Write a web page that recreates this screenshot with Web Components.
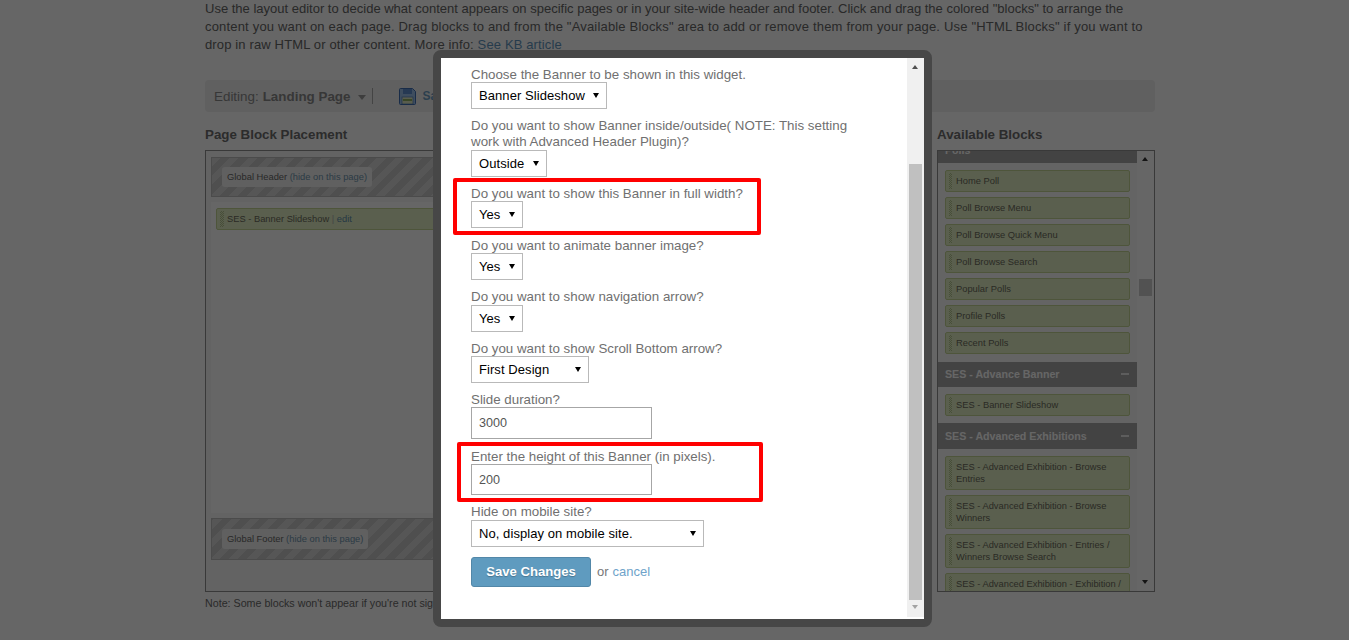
<!DOCTYPE html>
<html>
<head>
<meta charset="utf-8">
<style>
html,body{margin:0;padding:0;height:100%;overflow:hidden;background:#fff;font-family:"Liberation Sans",Arial,sans-serif;}
</style>
</head>
<body>
<layout-page>
  <span slot="intro">Use the layout editor to decide what content appears on specific pages or in your site-wide header and footer. Click and drag the colored "blocks" to arrange the<br><span style="letter-spacing:.18px">content you want on each page. Drag blocks to and from the "Available Blocks" area to add or remove them from your page. Use "HTML Blocks" if you want to</span><br><span style="letter-spacing:.14px">drop in raw HTML or other content. More info: <a style="color:#5f95bd;text-decoration:underline">See KB article</a></span></span>
  <editor-bar slot="bar"></editor-bar>
  <placement-box slot="left"></placement-box>
  <available-blocks slot="right">
    <block-group class="first" title="Polls">
      <block-item>Home Poll</block-item>
      <block-item>Poll Browse Menu</block-item>
      <block-item>Poll Browse Quick Menu</block-item>
      <block-item>Poll Browse Search</block-item>
      <block-item>Popular Polls</block-item>
      <block-item>Profile Polls</block-item>
      <block-item>Recent Polls</block-item>
    </block-group>
    <block-group title="SES - Advance Banner">
      <block-item>SES - Banner Slideshow</block-item>
    </block-group>
    <block-group title="SES - Advanced Exhibitions">
      <block-item>SES - Advanced Exhibition - Browse Entries</block-item>
      <block-item>SES - Advanced Exhibition - Browse Winners</block-item>
      <block-item>SES - Advanced Exhibition - Entries / Winners Browse Search</block-item>
      <block-item>SES - Advanced Exhibition - Exhibition / Album</block-item>
    </block-group>
  </available-blocks>
  <span slot="note">Note: Some blocks won't appear if you're not signed in</span>
</layout-page>

<modal-overlay>
  <form-field label="Choose the Banner to be shown in this widget."><fake-select style="width:136px">Banner Slideshow</fake-select></form-field>
  <form-field label="Do you want to show Banner inside/outside( NOTE: This setting work with Advanced Header Plugin)?"><fake-select style="width:76px">Outside</fake-select></form-field>
  <form-field label="Do you want to show this Banner in full width?" mark="a"><fake-select style="width:52px">Yes</fake-select></form-field>
  <form-field label="Do you want to animate banner image?"><fake-select style="width:52px">Yes</fake-select></form-field>
  <form-field label="Do you want to show navigation arrow?"><fake-select style="width:52px">Yes</fake-select></form-field>
  <form-field label="Do you want to show Scroll Bottom arrow?" style="margin-bottom:8px"><fake-select style="width:118px">First Design</fake-select></form-field>
  <form-field label="Slide duration?"><fake-input style="height:32px">3000</fake-input></form-field>
  <form-field label="Enter the height of this Banner (in pixels)." mark="b"><fake-input style="height:31px">200</fake-input></form-field>
  <form-field label="Hide on mobile site?"><fake-select style="width:233px">No, display on mobile site.</fake-select></form-field>
  <form-actions></form-actions>
</modal-overlay>

<script>
// small helper, every element is just css + markup in an open shadow root
function define(name, css, html) {
  customElements.define(name, class extends HTMLElement {
    constructor() {
      super();
      this.attachShadow({mode: 'open'});
      const t = document.createElement('template');
      t.innerHTML = '<style>' + css + '</style>' + html;
      this.shadowRoot.appendChild(t.content.cloneNode(true));
    }
    connectedCallback() {
      const lab = this.shadowRoot.querySelector('[data-label]');
      if (lab) lab.textContent = this.getAttribute('label');
      const ttl = this.shadowRoot.querySelector('[data-title]');
      if (ttl) ttl.textContent = this.getAttribute('title');
      if (this.hasAttribute('mark')) this.shadowRoot.querySelector('.mark').classList.add(this.getAttribute('mark'));
      if (this.classList.contains('first')) {
        this.shadowRoot.querySelector('.head').classList.add('first');
        this.shadowRoot.querySelector('.items').classList.add('first');
      }
    }
  });
}

define('layout-page', `
  :host{display:block;width:950px;margin-left:205px;font-family:"Liberation Sans",Arial,sans-serif;color:#666;}
  .intro{font-size:13px;line-height:18px;height:80px;white-space:nowrap;}
  .cols{display:grid;grid-template-columns:720px 218px;column-gap:12px;margin-top:15px;}
  .note{font-size:10.7px;line-height:14px;margin-top:4px;color:#6a6a6a;}
`, `
  <div class="intro"><slot name="intro"></slot></div>
  <slot name="bar"></slot>
  <div class="cols"><slot name="left"></slot><slot name="right"></slot></div>
  <div class="note"><slot name="note"></slot></div>
`);

define('editor-bar', `
  :host{display:flex;align-items:center;height:32px;background:#f0f0f0;border-radius:4px;padding-left:9px;font-size:13.4px;color:#8a8a8a;}
  b{margin-left:4px;}
  .caret{width:0;height:0;border:4px solid transparent;border-top:5px solid #999;border-bottom:0;margin:2px 6px 0 8px;}
  .sep{width:1px;height:16px;background:#aaa;margin-right:26px;}
  svg{margin-right:6px;}
  a{color:#6f9fc4;font-weight:bold;font-size:12px;}
`, `
  <span>Editing:</span><b>Landing Page</b><i class="caret"></i><i class="sep"></i>
  <svg width="17" height="17" viewBox="0 0 17 17"><path d="M.5 1.5a1 1 0 0 1 1-1h12l3 3v12a1 1 0 0 1-1 1h-14a1 1 0 0 1-1-1z" fill="#9cc0ea" stroke="#3f6fb5"/><rect x="4" y="1" width="9" height="5" fill="#5f8fd0"/><rect x="3" y="9" width="11" height="7" fill="#dfe8c0" stroke="#3f6fb5" stroke-width=".6"/><rect x="4" y="11" width="9" height="2" fill="#8fb060"/></svg>
  <a>Save</a>
`);

const stripes = 'repeating-linear-gradient(-45deg,#d8d8d8 0 6.5px,#c6c6c6 6.5px 13px)';
const itemCss = 'background:#e1eec4;border:1px solid #c3d495;border-radius:2px;color:#6b6b5b;font-size:9.33px;line-height:12px;';
const gripCss = 'background-image:conic-gradient(#b5c58e 25%,transparent 0 50%,#b5c58e 0 75%,transparent 0);background-size:2px 2px;';

define('placement-box', `
  :host{display:block;font-size:13.33px;}
  h4{margin:0 0 7px;font-size:13.33px;line-height:16px;color:#6e6e6e;}
  .box{box-sizing:border-box;height:442px;background:#f7f7f7;border:1px solid #8f8f8f;padding:6px 5px 31px;display:flex;flex-direction:column;gap:5px;}
  .band{background:${stripes};border:1px solid #bbb;padding:9px 10px;box-sizing:border-box;}
  .band.head{height:40px;}
  .band.foot{height:42px;padding-top:10px;}
  .pill{display:inline-block;background:#f0f0f0;border-radius:3px;font-size:9.33px;line-height:20px;padding:0 5px;color:#666;}
  .pill a{color:#6f94ad;}
  .zone{flex:1;background:#fff;padding:6px 5px;}
  .block{${itemCss}height:20px;line-height:20px;padding-left:10px;position:relative;}
  .block::before{content:"";position:absolute;left:3px;top:2px;bottom:2px;width:4px;${gripCss}}
  .block a{color:#5f8da8;}
`, `
  <h4>Page Block Placement</h4>
  <div class="box">
    <div class="band head"><span class="pill">Global Header <a>(hide on this page)</a></span></div>
    <div class="zone"><div class="block">SES - Banner Slideshow <span style="color:#aaa">|</span> <a>edit</a></div></div>
    <div class="band foot"><span class="pill">Global Footer <a>(hide on this page)</a></span></div>
  </div>
`);

define('available-blocks', `
  :host{display:block;}
  h4{margin:0 0 7px;font-size:13.33px;line-height:16px;color:#6e6e6e;}
  .box{box-sizing:border-box;height:442px;border:1px solid #8f8f8f;background:#fbfbfb;display:flex;overflow:hidden;}
  .list{width:199px;overflow:hidden;}
  .bar{flex:1;position:relative;background:#fff;}
  .thumb{position:absolute;left:2px;right:2px;top:128px;height:17px;background:#cdcdcd;}
  .up,.down{position:absolute;left:5px;width:0;height:0;border:3.5px solid transparent;}
  .up{top:6px;border-top:0;border-bottom:4px solid #333;}
  .down{bottom:7px;border-bottom:0;border-top:4px solid #333;}
`, `
  <h4>Available Blocks</h4>
  <div class="box">
    <div class="list"><slot></slot></div>
    <div class="bar"><i class="up"></i><div class="thumb"></div><i class="down"></i></div>
  </div>
`);

define('block-group', `
  :host{display:block;}
  .head{height:25.5px;box-sizing:border-box;display:flex;justify-content:space-between;align-items:center;background:#a8a8a8;color:#fff;font-weight:bold;font-size:10.67px;padding:0 8px 0 7px;}
  .head.first{margin-top:-14px;}
  .head i{width:8px;height:2px;background:#fff;opacity:.75;}
  .items{display:flex;flex-direction:column;gap:5px;padding:7px;}
  .items.first{padding-bottom:8px;}
`, `
  <div class="head"><span data-title></span><i></i></div>
  <div class="items"><slot></slot></div>
`);

define('block-item', `
  :host{display:block;box-sizing:border-box;${itemCss}padding:4px 8px 4px 10px;position:relative;}
  :host::before{content:"";position:absolute;left:3px;top:2px;bottom:2px;width:3px;${gripCss}}
`, `<slot></slot>`);

define('modal-overlay', `
  :host{position:fixed;inset:0;background:rgba(0,0,0,.6);display:block;}
  .modal{position:absolute;left:433px;top:50px;width:499px;height:577px;box-sizing:border-box;border:8px solid #474747;border-radius:8px;background:#fff;display:flex;overflow:hidden;}
  .body{flex:1;box-sizing:border-box;padding:8px 0 0 30px;overflow:hidden;}
  .bar{width:17px;height:559px;background:#f0f0f0;position:relative;}
  .thumb{position:absolute;left:2px;right:2px;top:106px;height:436px;background:#c0c0c0;}
  .up,.down{position:absolute;left:5px;width:0;height:0;border:3.5px solid transparent;}
  .up{top:7px;border-top:0;border-bottom:4px solid #505050;}
  .down{bottom:8px;border-bottom:0;border-top:4px solid #a3a3a3;}
`, `
  <div class="modal">
    <div class="body"><slot></slot></div>
    <div class="bar"><i class="up"></i><div class="thumb"></div><i class="down"></i></div>
  </div>
`);

define('form-field', `
  :host{display:block;margin-bottom:8.7px;position:relative;font-family:"Liberation Sans",Arial,sans-serif;}
  label{display:block;font-size:13.33px;line-height:16px;color:#707070;max-width:385px;padding-top:.5px;margin-bottom:-.5px;}
  .mark{display:none;position:absolute;border:4px solid #f00;border-radius:2px;box-sizing:border-box;pointer-events:none;}
  .mark.a{display:block;left:-18px;top:-7px;width:308px;height:57px;}
  .mark.b{display:block;left:-14px;top:-6px;width:306px;height:60px;}
`, `<label data-label></label><slot></slot><div class="mark"></div>`);

define('fake-select', `
  :host{display:block;box-sizing:border-box;height:27px;background:#fff;border:1px solid #b9b9b9;position:relative;font-family:"Liberation Sans",Arial,sans-serif;font-size:13px;letter-spacing:.07px;line-height:26px;padding-left:7px;color:#000;}
  i{position:absolute;right:7px;top:10px;width:0;height:0;border:3px solid transparent;border-top:5px solid #000;border-bottom:0;}
`, `<slot></slot><i></i>`);

define('fake-input', `
  :host{display:flex;align-items:center;box-sizing:border-box;width:181px;background:#fff;border:1px solid #a6a6a6;font-family:"Liberation Sans",Arial,sans-serif;font-size:12.6px;padding-left:7px;color:#555;}
`, `<slot></slot>`);

define('form-actions', `
  :host{display:flex;align-items:center;margin-top:10px;font-family:"Liberation Sans",Arial,sans-serif;font-size:13px;color:#777;}
  button{box-sizing:border-box;width:120px;height:30px;background:#5f9bbf;border:1px solid #5287a8;border-radius:3px;color:#fff;font:bold 13.1px "Liberation Sans",Arial,sans-serif;text-shadow:0 1px 1px rgba(0,0,0,.25);padding:0;margin-right:6px;}
  a{color:#6fa3ca;margin-left:4px;}
`, `<button>Save Changes</button>or<a>cancel</a>`);
</script>
</body>
</html>
